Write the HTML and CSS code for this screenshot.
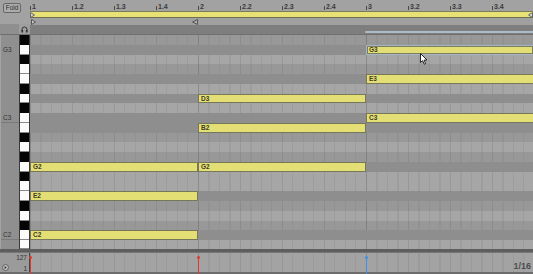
FILE: index.html
```html
<!DOCTYPE html>
<html>
<head>
<meta charset="utf-8">
<link rel="stylesheet" href="styles.css">
</head>
<body>
<div class="app">
  <div class="corner">
    <div class="fold">Fold</div>
    <div class="corner-bottom">
      <div class="corner-label"></div>
      <div class="preview">
        <svg width="7" height="7" viewBox="0 0 7 7"><path d="M1 5.5 V3.5 A2.5 2.5 0 0 1 6 3.5 V5.5" fill="none" stroke="#333" stroke-width="1"/><rect x="0.5" y="4" width="1.6" height="2.5" fill="#333"/><rect x="4.9" y="4" width="1.6" height="2.5" fill="#333"/></svg>
      </div>
    </div>
  </div>

  <div class="ruler">
    <div class="numbers">
      <div class="beat">1</div><div class="beat">1.2</div><div class="beat">1.3</div><div class="beat">1.4</div>
      <div class="beat">2</div><div class="beat">2.2</div><div class="beat">2.3</div><div class="beat">2.4</div>
      <div class="beat">3</div><div class="beat">3.2</div><div class="beat">3.3</div><div class="beat">3.4</div>
    </div>
    <div class="loop">
      <svg class="loop-start" width="5" height="6" viewBox="0 0 5 6"><path d="M0.5 0.5 L4.5 3 L0.5 5.5 Z" fill="#d8d8d8" stroke="#666" stroke-width="1"/></svg>
      <svg class="loop-end" width="5" height="6" viewBox="0 0 5 6"><path d="M4.5 0.5 L0.5 3 L4.5 5.5 Z" fill="#d8d8d8" stroke="#666" stroke-width="1"/></svg>
    </div>
    <div class="markers">
      <div class="marker-span">
        <svg width="5" height="6" viewBox="0 0 5 6"><path d="M0.5 0.5 L4.5 3 L0.5 5.5 Z" fill="#c8c8c8" stroke="#555" stroke-width="1"/></svg>
        <svg width="6" height="6" viewBox="0 0 6 6"><path d="M5.5 0.5 L0.5 3 L5.5 5.5 Z" fill="#b0b0b0" stroke="#555" stroke-width="1"/></svg>
      </div>
    </div>
  </div>

  <div class="strip"><div class="sel-range"></div></div>

  <div class="labels">
    <div class="lab"></div><div class="lab">G3</div><div class="lab"></div><div class="lab"></div>
    <div class="lab"></div><div class="lab"></div><div class="lab"></div><div class="lab"></div>
    <div class="lab oct">C3</div><div class="lab"></div><div class="lab"></div><div class="lab"></div>
    <div class="lab"></div><div class="lab"></div><div class="lab"></div><div class="lab"></div>
    <div class="lab"></div><div class="lab"></div><div class="lab"></div><div class="lab"></div>
    <div class="lab oct">C2</div><div class="lab"></div>
  </div>

  <div class="keys">
    <div class="key b"></div><div class="key w"></div><div class="key b"></div><div class="key w"></div>
    <div class="key w"></div><div class="key b"></div><div class="key w"></div><div class="key b"></div>
    <div class="key w"></div><div class="key w"></div><div class="key b"></div><div class="key w"></div>
    <div class="key b"></div><div class="key w"></div><div class="key b"></div><div class="key w"></div>
    <div class="key w"></div><div class="key b"></div><div class="key w"></div><div class="key b"></div>
    <div class="key w"></div><div class="key w"></div>
  </div>

  <div class="roll">
    <div class="row b"></div><div class="row"></div><div class="row b"></div><div class="row"></div>
    <div class="row"></div><div class="row b"></div><div class="row"></div><div class="row b"></div>
    <div class="row"></div><div class="row"></div><div class="row b"></div><div class="row"></div>
    <div class="row b"></div><div class="row"></div><div class="row b"></div><div class="row"></div>
    <div class="row"></div><div class="row b"></div><div class="row"></div><div class="row b"></div>
    <div class="row"></div><div class="row"></div>

    <div class="note sel" style="grid-row:2; grid-column:9 / 13">G3</div>
    <div class="note" style="grid-row:5; grid-column:9 / 13">E3</div>
    <div class="note" style="grid-row:9; grid-column:9 / 13">C3</div>
    <div class="note" style="grid-row:7; grid-column:5 / 9">D3</div>
    <div class="note" style="grid-row:10; grid-column:5 / 9">B2</div>
    <div class="note" style="grid-row:14; grid-column:1 / 5">G2</div>
    <div class="note" style="grid-row:14; grid-column:5 / 9">G2</div>
    <div class="note" style="grid-row:17; grid-column:1 / 5">E2</div>
    <div class="note" style="grid-row:21; grid-column:1 / 5">C2</div>

    <svg class="cursor" width="8" height="12" viewBox="0 0 8 12"><path d="M0.5 0.5 L0.5 9.5 L2.6 7.6 L4.2 11.2 L5.6 10.6 L4.1 7.1 L7 7 Z" fill="#fff" stroke="#111" stroke-width="0.9" stroke-linejoin="round"/></svg>
  </div>

  <div class="sep"></div>

  <div class="vel-left">
    <svg class="vel-icon" width="7" height="7" viewBox="0 0 7 7"><circle cx="3.5" cy="3.5" r="3" fill="#bdbdbd" stroke="#555" stroke-width="0.8"/><path d="M2.6 2 L4.8 3.5 L2.6 5 Z" fill="#333"/></svg>
    <div class="vel-scale">
      <span>127</span>
      <span>1</span>
    </div>
  </div>

  <div class="vel-lane">
    <div class="stalks">
      <div class="stalk red"></div>
      <div class="stalk red"></div>
      <div class="stalk blue"></div>
    </div>
    <div class="grid-label">1/16</div>
  </div>
</div>
</body>
</html>
```

FILE: styles.css
```css
* { box-sizing: border-box; }

html, body {
  margin: 0;
  padding: 0;
}

body {
  width: 533px;
  height: 274px;
  overflow: hidden;
  background: #8e8e8e;
  font-family: "Liberation Sans", Arial, sans-serif;
  color: #2e2e2e;
}

.app {
  display: grid;
  grid-template-columns: 19px 11px 503px;
  grid-template-rows: 25px 10px 214px 4px 21px;
  width: 533px;
  height: 274px;
}

/* ---------- top left corner ---------- */
.corner {
  grid-column: 1 / 3;
  grid-row: 1 / 3;
  display: flex;
  flex-direction: column;
  justify-content: space-between;
  background: #a2a2a2;
  border-bottom: 1px solid #6e6e6e;
}

.fold {
  margin: 3px 0 0 3px;
  width: 18px;
  height: 10px;
  border: 1px solid #666;
  border-radius: 2px;
  background: #acacac;
  font-size: 6.5px;
  line-height: 8px;
  text-align: center;
  color: #2e2e2e;
}

.corner-bottom {
  display: flex;
  height: 10px;
}

.corner-label {
  width: 19px;
  background: #8f8f8f;
}

.preview {
  width: 11px;
  display: flex;
  align-items: center;
  justify-content: center;
  background: #9e9e9e;
}

/* ---------- ruler ---------- */
.ruler {
  grid-column: 3;
  grid-row: 1;
  display: flex;
  flex-direction: column;
  background: #a2a2a2;
}

.numbers {
  display: flex;
  height: 11px;
  overflow: hidden;
}

.beat {
  flex: none;
  width: 42px;
  position: relative;
  padding: 3px 0 0 2px;
  font-size: 7px;
  font-weight: bold;
  line-height: 7px;
  color: #3a3a3a;
}

.beat::before {
  content: "";
  position: absolute;
  left: 0;
  bottom: 1px;
  width: 1px;
  height: 4px;
  background: #4a4a4a;
}

.loop {
  height: 7px;
  display: flex;
  align-items: center;
  justify-content: space-between;
  background: #e7e273;
  border-top: 1px solid #7c7c5c;
  border-bottom: 1px solid #6e6e55;
}

.markers {
  flex: 1;
  display: flex;
  align-items: center;
  background: #a0a0a0;
}

.marker-span {
  width: 168px;
  display: flex;
  justify-content: space-between;
  padding: 0 0 0 1px;
}

.strip {
  grid-column: 3;
  grid-row: 2;
  display: flex;
  align-items: flex-end;
  justify-content: flex-end;
  background: #7e7e7e;
  border-bottom: 1px solid #707070;
  padding-bottom: 1px;
}

.sel-range {
  width: 168px;
  height: 2px;
  background: #a9bcc7;
  border-radius: 1px 0 0 1px;
}

/* ---------- labels & keys ---------- */
.labels {
  grid-column: 1;
  grid-row: 3;
  display: grid;
  grid-template-rows: repeat(21, 9.78px) 1fr;
  background: #8f8f8f;
  border-left: 1px solid #a4a4a4;
}

.lab {
  font-size: 6.5px;
  line-height: 9.78px;
  padding-left: 2px;
  color: #333;
}

.lab.oct {
  border-bottom: 1px solid #7a7a7a;
}

.keys {
  grid-column: 2;
  grid-row: 3;
  display: grid;
  grid-template-rows: repeat(21, 9.78px) 1fr;
  background: #3a3a3a;
  border-left: 1px solid #3a3a3a;
  border-right: 1px solid #3a3a3a;
}

.key.w {
  background: #fbfbfb;
  border-bottom: 1px solid #8a8a8a;
}

.key.b {
  background: #050505;
}

/* ---------- piano roll ---------- */
.roll {
  grid-column: 3;
  grid-row: 3;
  position: relative;
  overflow: hidden;
  display: grid;
  grid-template-columns: repeat(12, 42px);
  grid-template-rows: repeat(21, 9.78px) 1fr;
}

.row {
  grid-column: 1 / -1;
  background-color: #a6a6a6;
  background-image:
    repeating-linear-gradient(90deg, #8a8a8a 0 1px, transparent 1px 168px),
    repeating-linear-gradient(90deg, #979797 0 1px, transparent 1px 42px),
    repeating-linear-gradient(90deg, #9d9d9d 0 1px, transparent 1px 10.5px);
}

.row.b {
  background-color: #989898;
  background-image:
    repeating-linear-gradient(90deg, #808080 0 1px, transparent 1px 168px),
    repeating-linear-gradient(90deg, #8c8c8c 0 1px, transparent 1px 42px),
    repeating-linear-gradient(90deg, #929292 0 1px, transparent 1px 10.5px);
}

.note {
  background: #e4df74;
  border: 1px solid #77775c;
  font-size: 6.5px;
  font-weight: bold;
  line-height: 7.5px;
  padding-left: 2px;
  color: #3c3c2a;
  overflow: hidden;
}

.note.sel {
  border-color: #a3b6c2;
  box-shadow: inset 0 0 0 1px #7d7d60;
}

.cursor {
  position: absolute;
  left: 390px;
  top: 18px;
}

/* ---------- separator & velocity ---------- */
.sep {
  grid-column: 1 / -1;
  grid-row: 4;
  background: #5e5e5e;
  border-bottom: 1px solid #777;
}

.vel-left {
  grid-column: 1 / 3;
  grid-row: 5;
  display: flex;
  align-items: flex-end;
  justify-content: space-between;
  background: #9b9b9b;
  border-bottom: 2px solid #6c6c6c;
  padding: 0 0 0 2px;
}

.vel-icon {
  margin-bottom: 1px;
}

.vel-scale {
  height: 100%;
  display: flex;
  flex-direction: column;
  justify-content: space-between;
  align-items: flex-end;
  padding: 1px 2px 0 0;
  border-right: 1px solid #444;
  font-size: 6.5px;
  line-height: 7px;
  color: #333;
}

.vel-lane {
  grid-column: 3;
  grid-row: 5;
  position: relative;
  display: flex;
  align-items: flex-end;
  justify-content: flex-end;
  background-color: #a3a3a3;
  background-image:
    repeating-linear-gradient(90deg, #8a8a8a 0 1px, transparent 1px 168px),
    repeating-linear-gradient(90deg, #969696 0 1px, transparent 1px 42px),
    repeating-linear-gradient(90deg, #9b9b9b 0 1px, transparent 1px 10.5px);
  border-bottom: 2px solid #6c6c6c;
}

.stalks {
  position: absolute;
  left: 0;
  top: 3px;
  bottom: -2px;
  display: flex;
}

.stalk {
  width: 168px;
  position: relative;
}

.stalk::before {
  content: "";
  position: absolute;
  left: 0;
  top: 1px;
  bottom: 0;
  width: 1px;
  background: var(--c);
}

.stalk::after {
  content: "";
  position: absolute;
  left: -1px;
  top: 0;
  width: 3px;
  height: 3px;
  border-radius: 50%;
  background: var(--c);
}

.stalk.red { --c: #e2372d; }
.stalk.blue { --c: #3f8fe8; }

.grid-label {
  font-size: 9px;
  font-weight: bold;
  line-height: 9px;
  color: #4e4e4e;
  padding: 0 2px 1px 0;
}
```
